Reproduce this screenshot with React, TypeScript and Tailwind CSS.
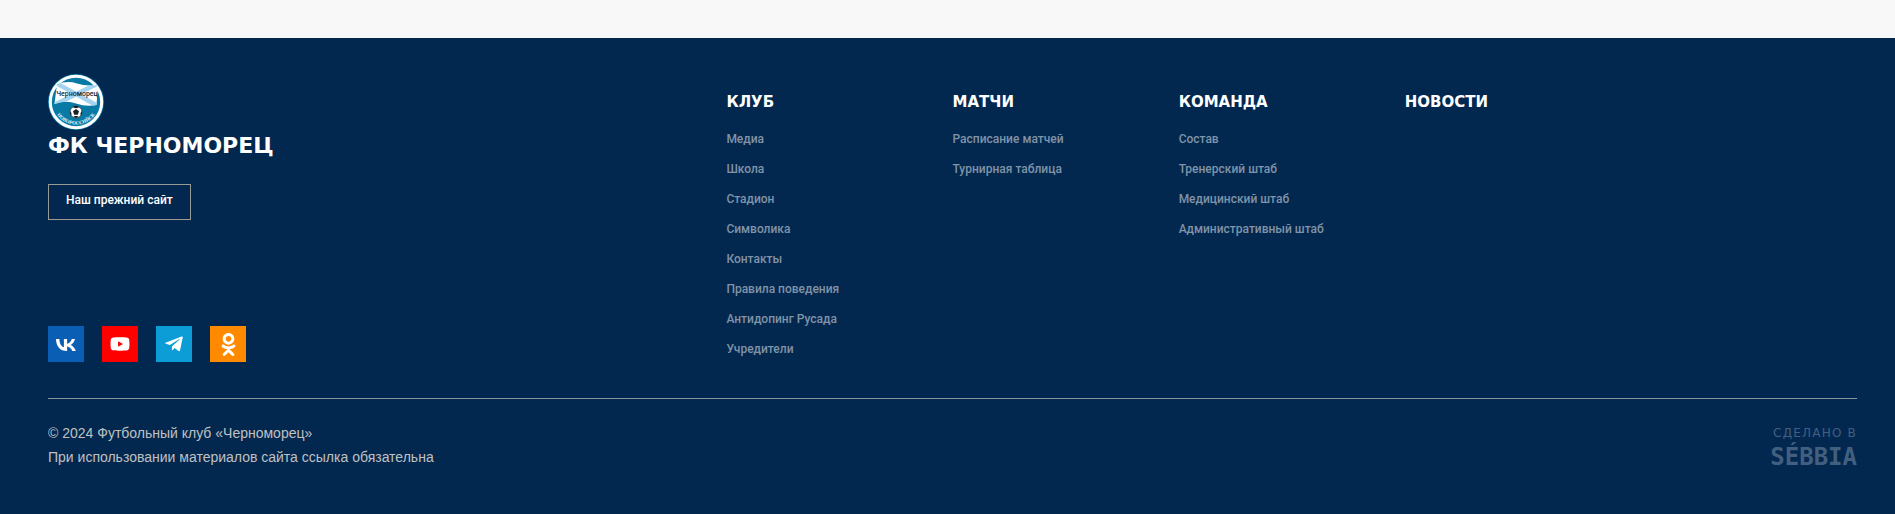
import React from "react";
import { FaVk, FaYoutube, FaTelegramPlane, FaOdnoklassniki } from "react-icons/fa";

type Column = { title: string; links: string[] };

const columns: Column[] = [
  {
    title: "КЛУБ",
    links: [
      "Медиа",
      "Школа",
      "Стадион",
      "Символика",
      "Контакты",
      "Правила поведения",
      "Антидопинг Русада",
      "Учредители",
    ],
  },
  { title: "МАТЧИ", links: ["Расписание матчей", "Турнирная таблица"] },
  {
    title: "КОМАНДА",
    links: ["Состав", "Тренерский штаб", "Медицинский штаб", "Административный штаб"],
  },
  { title: "НОВОСТИ", links: [] },
];

const socials = [
  {
    name: "ВКонтакте",
    color: "bg-[#0a5fb4]",
    icon: (
      <svg viewBox="0 0 20 12" className="mt-0.5 h-3 w-5" fill="currentColor" aria-hidden="true">
        <path d="M10.900 12C4.100 12 .2 7.500 0 0h3.400c.1 5.500 2.600 7.800 4.500 8.300V0h3.200v4.700c2-.2 4-2.300 4.700-4.700H19c-.5 3-2.700 5.100-4.300 6 1.600.7 4.100 2.600 5.100 6h-3.500c-.8-2.300-2.700-4.100-5.200-4.400V12Z" />
      </svg>
    ),
  },
  { name: "YouTube", color: "bg-[#ff0000]", icon: <FaYoutube className="size-5" /> },
  { name: "Telegram", color: "bg-[#0c9dd6]", icon: <FaTelegramPlane className="size-5" /> },
  { name: "Одноклассники", color: "bg-[#ff8a00]", icon: <FaOdnoklassniki className="size-[23px]" /> },
];

function Crest() {
  return (
    <svg viewBox="0 0 56 56" className="size-14" aria-hidden="true">
      <defs>
        <path id="crest-arc" d="M7 37 A23 23 0 0 0 49 37" />
        <clipPath id="crest-flag">
          <path d="M9 10 Q20 6.500 29 9.500 T50 11 L48.500 31 Q38 33 28 29.500 T6.500 30 Z" />
        </clipPath>
      </defs>
      <circle cx="28" cy="28" r="28" fill="#0b7fa9" />
      <circle cx="28" cy="28" r="25.700" fill="#087aa5" stroke="#fff" strokeWidth="3" />
      <g clipPath="url(#crest-flag)">
        <rect width="56" height="36" fill="#fff" />
        <path d="M6 8 L50 32 M51 9 L6 31" stroke="#a3d3ee" strokeWidth="4.500" />
      </g>
      <text
        x="29"
        y="22"
        textAnchor="middle"
        className="font-[Roboto,sans-serif] text-[7px] font-medium"
        fill="#17262f"
      >
        Черноморец
      </text>
      <circle cx="28" cy="38" r="6" fill="#fff" stroke="#26323a" strokeWidth=".7" />
      <path
        d="M28 35l3 2.200-1.200 3.500h-3.600L25 37.200Z M24.500 33.300l2-1.200h3l2 1.200-3.500 1Z M22.200 37l1.400 2.200-.5 2.700-1.100-2.400Z M33.800 37l-1.400 2.200.5 2.700 1.100-2.400Z M25.300 42.800l1.500-.7h2.400l1.500.7-2.700 1.200Z"
        fill="#18232a"
      />
      <text
        className="font-['Liberation_Serif',serif] text-[5px] font-bold"
        fill="#e3f3fa"
        textAnchor="middle"
      >
        <textPath href="#crest-arc" startOffset="50%">
          НОВОРОССИЙСК
        </textPath>
      </text>
    </svg>
  );
}

export default function App() {
  return (
    <div className="bg-[#f8f8f8] pt-[38px] font-[Roboto,sans-serif]">
      <footer className="bg-[#022850] pt-9 pr-[38px] pb-11 pl-12 text-white">
        <div className="grid grid-cols-8">
          <div className="col-span-3 flex flex-col items-start justify-between">
            <div className="flex flex-col items-start">
              <a href="#home" className="block">
                <Crest />
                <span className="block font-['DejaVu_Sans',sans-serif] text-[22px] leading-8 font-bold">
                  ФК ЧЕРНОМОРЕЦ
                </span>
              </a>
              <a
                href="#old-site"
                className="mt-[22px] flex h-9 items-start border border-[#999a96] px-[17px] pt-[6px] text-xs leading-[18px] font-medium"
              >
                Наш прежний сайт
              </a>
            </div>
            <ul className="flex gap-[18px]">
              {socials.map((s) => (
                <li key={s.name}>
                  <a
                    href="#social"
                    aria-label={s.name}
                    className={`flex size-9 items-center justify-center ${s.color}`}
                  >
                    {s.icon}
                  </a>
                </li>
              ))}
            </ul>
          </div>
          {columns.map((c) => (
            <nav key={c.title} aria-label={c.title} className="pt-[18px] pb-1">
              <h2 className="font-['DejaVu_Sans',sans-serif] text-[15px] leading-5 font-bold">
                <a href="#section">{c.title}</a>
              </h2>
              <ul className="mt-[18px] flex flex-col gap-3">
                {c.links.map((l) => (
                  <li key={l} className="text-xs leading-[18px] font-medium whitespace-nowrap text-[#8093a7]">
                    <a href="#page">{l}</a>
                  </li>
                ))}
              </ul>
            </nav>
          ))}
        </div>
        <div className="mt-9 flex items-start justify-between border-t border-[#8a949c] pt-[22px]">
          <p className="font-['Liberation_Sans',sans-serif] text-sm leading-6 text-[#c0c0c0]">
            © 2024 Футбольный клуб «Черноморец»
            <br />
            При использовании материалов сайта ссылка обязательна
          </p>
          <a href="#sebbia" className="flex flex-col items-end pt-1 text-[#425f80]">
            <span className="font-['DejaVu_Sans',sans-serif] text-xs leading-4 tracking-widest">СДЕЛАНО В</span>
            <span className="font-['DejaVu_Sans_Mono',monospace] text-2xl leading-8 font-bold">SÉBBIA</span>
          </a>
        </div>
      </footer>
    </div>
  );
}
